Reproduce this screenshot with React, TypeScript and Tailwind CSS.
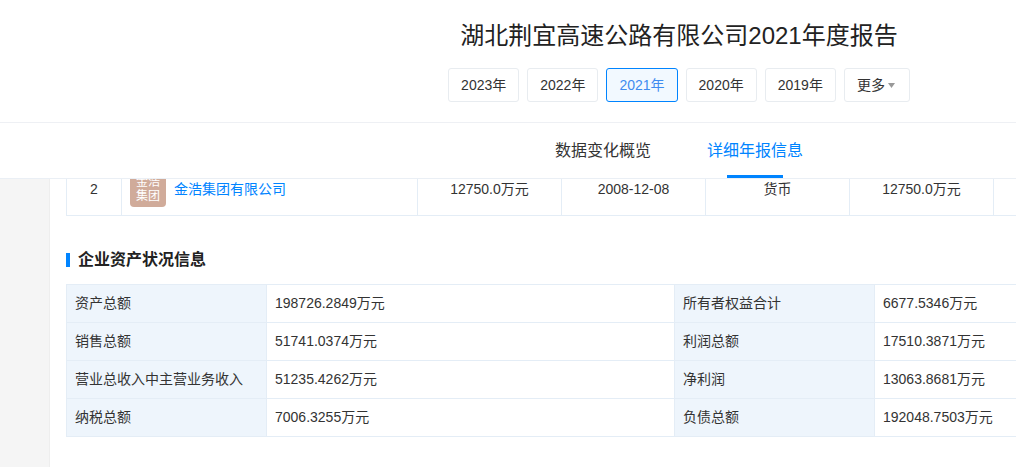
import React from 'react';

const years = ['2023年', '2022年', '2021年', '2020年', '2019年'];

const assets = [
  ['资产总额', '198726.2849万元', '所有者权益合计', '6677.5346万元'],
  ['销售总额', '51741.0374万元', '利润总额', '17510.3871万元'],
  ['营业总收入中主营业务收入', '51235.4262万元', '净利润', '13063.8681万元'],
  ['纳税总额', '7006.3255万元', '负债总额', '192048.7503万元'],
];

const YearButton: React.FC<{ label: string; active: boolean }> = ({ label, active }) => (
  <button
    className={`h-[34px] px-3 rounded-[3px] border text-sm ${
      active ? 'border-[#0084ff] bg-[#f2f9ff] text-[#3f8cf0]' : 'border-[#e8ecf0] bg-white text-[#333333]'
    }`}
  >
    {label}
  </button>
);

const ShareholderRow: React.FC = () => (
  <div className="grid grid-cols-[55px_296px_144px_144px_144px_144px_144px] h-[53px] border-l border-b border-[#e4edf6] text-sm text-[#333333]">
    <div className="flex items-center justify-center border-r border-[#e4edf6]">2</div>
    <div className="flex items-center gap-2 pl-2 border-r border-[#e4edf6]">
      <div className="w-9 h-9 rounded-[4px] bg-[#d0ab9a] text-white text-xs leading-[14px] flex items-center justify-center text-center">
        <span>
          金浩
          <br />
          集团
        </span>
      </div>
      <a className="text-[#0084ff]">金浩集团有限公司</a>
    </div>
    <div className="flex items-center justify-center border-r border-[#e4edf6]">12750.0万元</div>
    <div className="flex items-center justify-center border-r border-[#e4edf6]">2008-12-08</div>
    <div className="flex items-center justify-center border-r border-[#e4edf6]">货币</div>
    <div className="flex items-center justify-center border-r border-[#e4edf6]">12750.0万元</div>
    <div className="border-r border-[#e4edf6]"></div>
  </div>
);

const App: React.FC = () => {
  return (
    <div className="w-[1016px] h-[467px] overflow-hidden bg-white font-['Liberation_Sans','Noto_Sans_CJK_SC',sans-serif]">
      <div className="w-[1358px]">
        {/* header */}
        <div className="relative z-10 bg-white">
          <div className="h-[123px] border-b border-[#eef0f4] flex flex-col items-center">
            <h1 className="mt-[20px] h-[32px] leading-[32px] text-2xl text-[#222222]">湖北荆宜高速公路有限公司2021年度报告</h1>
            <div className="mt-[16px] flex gap-2">
              {years.map((y) => (
                <YearButton key={y} label={y} active={y === '2021年'} />
              ))}
              <button className="h-[34px] w-[66px] pl-3 rounded-[3px] border border-[#e8ecf0] flex items-center text-sm text-[#333333]">
                更多
                <svg className="ml-[3px]" width="7" height="5" viewBox="0 0 7 5">
                  <path d="M0 0h7L3.5 5z" fill="#999999" />
                </svg>
              </button>
            </div>
          </div>
          <div className="h-[56px] border-b border-[#eaeff5] flex justify-center gap-14 text-base">
            <div className="leading-[56px] text-[#333333]">数据变化概览</div>
            <div className="relative leading-[56px] text-[#0084ff]">
              详细年报信息
              <div className="absolute left-5 bottom-0 w-14 h-[3px] bg-[#0084ff]"></div>
            </div>
          </div>
        </div>

        {/* body */}
        <div className="flex h-[288px]">
          <div className="w-[50px] shrink-0 bg-[#f5f5f5] border-r border-[#eeeeee]"></div>
          <div className="flex-1 pl-4 -mt-4">
            <ShareholderRow />

            <div className="mt-[37px] flex items-center h-[14px]">
              <div className="w-1 h-[14px] bg-[#0084ff]"></div>
              <h2 className="ml-2 text-base font-bold text-[#222222]">企业资产状况信息</h2>
            </div>

            <div className="mt-[17px] grid grid-cols-[200px_408px_200px_400px] border-l border-t border-[#e4edf6] text-sm text-[#333333]">
              {assets.map((row) =>
                row.map((cell, i) => (
                  <div
                    key={cell}
                    className={`h-[38px] leading-[37px] pl-2 border-r border-b border-[#e4edf6] ${
                      i % 2 === 0 ? 'bg-[#eef5fc]' : 'bg-white'
                    }`}
                  >
                    {cell}
                  </div>
                ))
              )}
            </div>
          </div>
        </div>
      </div>
    </div>
  );
};

export default App;
